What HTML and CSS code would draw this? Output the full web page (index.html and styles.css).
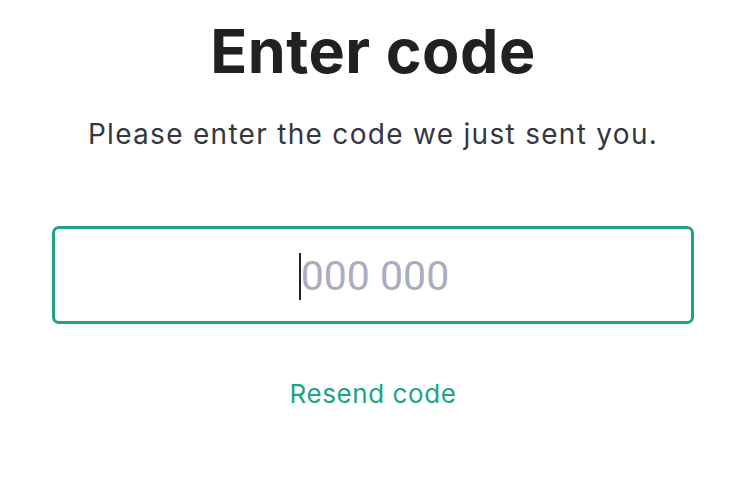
FILE: index.html
```html
<!DOCTYPE html>
<html lang="en">
<head>
<meta charset="utf-8">
<title>Enter code</title>
<link rel="stylesheet" href="styles.css">
</head>
<body>
<main class="page">
  <h1 class="title">Enter code</h1>
  <p class="subtitle">Please enter the code we just sent you.</p>
  <div class="code-field">
    <span class="caret"></span><span class="placeholder">000 000</span>
  </div>
  <a class="resend" href="#">Resend code</a>
</main>
</body>
</html>
```

FILE: styles.css
```css
html, body {
  margin: 0;
  padding: 0;
  background: #ffffff;
}
body {
  font-family: Inter, "Noto Sans", "Liberation Sans", sans-serif;
  width: 744px;
  height: 488px;
  overflow: hidden;
}
.page {
  display: flex;
  flex-direction: column;
  align-items: center;
  padding: 15px 50px 0 52px;
}
.title {
  margin: 0;
  font-size: 61px;
  font-weight: 700;
  line-height: 72px;
  color: #202123;
  letter-spacing: 0.5px;
}
.subtitle {
  margin: 29px 0 0;
  font-size: 28px;
  line-height: 36px;
  color: #353740;
  font-weight: 400;
  letter-spacing: 1.3px;
}
.code-field {
  margin-top: 74px;
  box-sizing: border-box;
  width: 642px;
  height: 98px;
  border: 3px solid #20a383;
  border-radius: 7px;
  display: flex;
  align-items: center;
  justify-content: center;
}
.caret {
  width: 2px;
  height: 47px;
  background: #202123;
  margin-top: 3px;
  margin-left: 2px;
}
.placeholder {
  font-family: Roboto, "Liberation Sans", sans-serif;
  font-size: 41px;
  color: #acabc1;
  line-height: 48px;
  margin-top: 2px;
}
.resend {
  margin-top: 54px;
  font-size: 26px;
  line-height: 32px;
  color: #20a383;
  text-decoration: none;
  letter-spacing: 0.6px;
}
```
